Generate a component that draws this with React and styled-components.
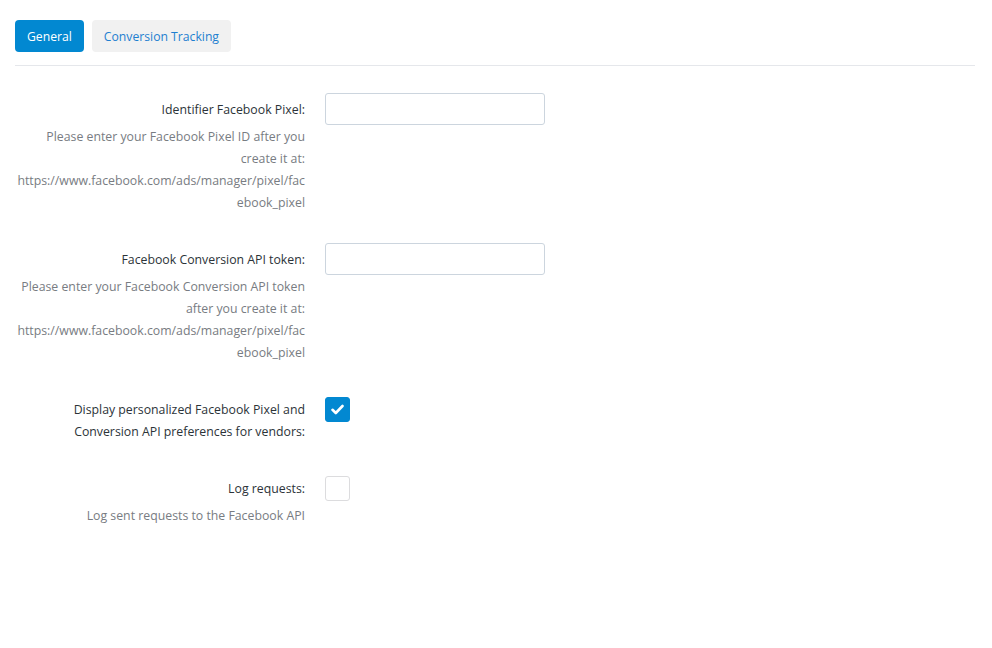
import { createGlobalStyle, styled } from "styled-components";

const GlobalStyle = createGlobalStyle`
  body {
    margin: 0;
    background: #ffffff;
    font-family: "Open Sans", "Noto Sans", sans-serif;
    color: #32373c;
  }
`;

const Page = styled.div`
  padding: 20px 17px 0 15px;
`;

const Tabs = styled.div`
  display: flex;
  gap: 8px;
  padding-bottom: 13px;
  border-bottom: 1px solid #e5e7eb;
`;

const Tab = styled.button`
  height: 32px;
  padding: 0 12px;
  border: none;
  border-radius: 4px;
  font-family: inherit;
  font-size: 12.2px;
  cursor: pointer;
  background: ${(p) => (p.$active ? "#0288d1" : "#f1f1f1")};
  color: ${(p) => (p.$active ? "#ffffff" : "#1e7fd0")};
`;

const Form = styled.div`
  display: flex;
  flex-direction: column;
  gap: 29px;
  padding-top: 27px;
`;

const Row = styled.div`
  display: grid;
  grid-template-columns: 290px 1fr;
  column-gap: 20px;
  align-items: start;
`;

const LabelCell = styled.div`
  text-align: right;
  font-size: 12.3px;
  line-height: 22px;
  padding-top: 6px;
`;

const Label = styled.div`
  color: #2c3338;
`;

const Description = styled.div`
  margin-top: 5px;
  color: #787c82;
  overflow-wrap: anywhere;
`;

const TextInput = styled.input`
  box-sizing: border-box;
  width: 220px;
  height: 32px;
  border: 1px solid #ccd5de;
  border-radius: 3px;
  background: #fff;
  outline: none;
`;

const Checkbox = styled.div`
  box-sizing: border-box;
  width: 25px;
  height: 25px;
  margin-top: 4px;
  border-radius: 3px;
  display: flex;
  align-items: center;
  justify-content: center;
  background: ${(p) => (p.$checked ? "#0288d1" : "#fff")};
  border: 1px solid ${(p) => (p.$checked ? "#0288d1" : "#dcdcde")};
`;

function Check() {
  return (
    <svg width="13" height="11" viewBox="0 0 13 11">
      <path
        d="M1.5 5.8 L4.8 9 L11.5 2"
        fill="none"
        stroke="#fff"
        strokeWidth="2.6"
        strokeLinecap="round"
        strokeLinejoin="round"
      />
    </svg>
  );
}

const url = "https://www.facebook.com/ads/manager/pixel/facebook_pixel";

export default function App() {
  return (
    <Page>
      <GlobalStyle />
      <Tabs>
        <Tab $active>General</Tab>
        <Tab>Conversion Tracking</Tab>
      </Tabs>
      <Form>
        <Row>
          <LabelCell>
            <Label>Identifier Facebook Pixel:</Label>
            <Description>
              Please enter your Facebook Pixel ID after you create it at: {url}
            </Description>
          </LabelCell>
          <TextInput type="text" />
        </Row>
        <Row>
          <LabelCell>
            <Label>Facebook Conversion API token:</Label>
            <Description>
              Please enter your Facebook Conversion API token after you create
              it at: {url}
            </Description>
          </LabelCell>
          <TextInput type="text" />
        </Row>
        <Row>
          <LabelCell>
            <Label>
              Display personalized Facebook Pixel and Conversion API
              preferences for vendors:
            </Label>
          </LabelCell>
          <Checkbox $checked>
            <Check />
          </Checkbox>
        </Row>
        <Row>
          <LabelCell>
            <Label>Log requests:</Label>
            <Description>Log sent requests to the Facebook API</Description>
          </LabelCell>
          <Checkbox />
        </Row>
      </Form>
    </Page>
  );
}
